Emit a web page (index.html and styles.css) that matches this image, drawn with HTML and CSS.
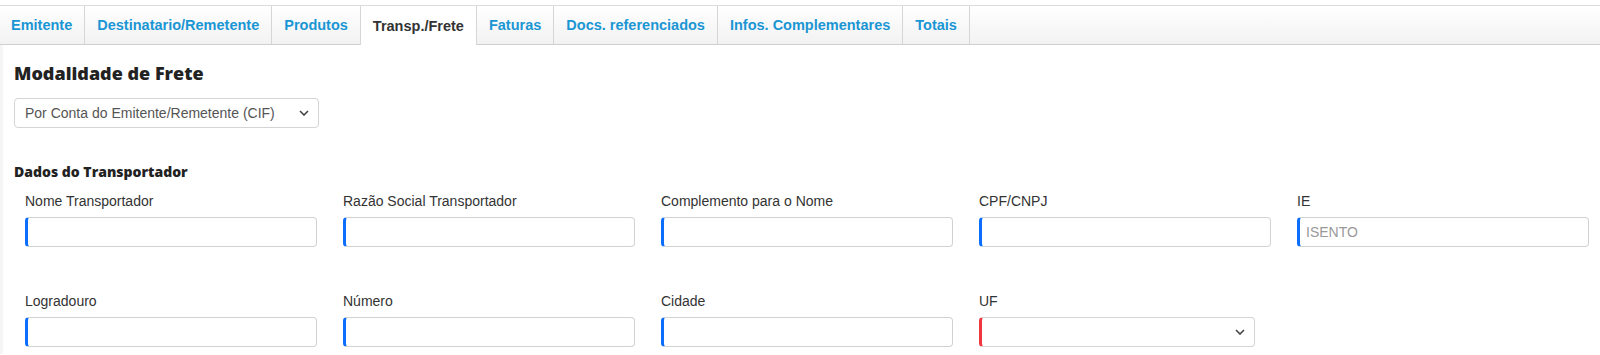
FILE: index.html
```html
<!DOCTYPE html>
<html lang="pt">
<head>
<meta charset="utf-8">
<title>Transp./Frete</title>
<link rel="stylesheet" href="styles.css">
</head>
<body>
<nav class="tabs">
  <a class="tab">Emitente</a>
  <a class="tab">Destinatario/Remetente</a>
  <a class="tab">Produtos</a>
  <a class="tab active">Transp./Frete</a>
  <a class="tab">Faturas</a>
  <a class="tab">Docs. referenciados</a>
  <a class="tab">Infos. Complementares</a>
  <a class="tab">Totais</a>
</nav>
<main class="content">
  <h2 class="title">Modalidade de Frete</h2>
  <select class="select modal">
    <option>Por Conta do Emitente/Remetente (CIF)</option>
  </select>
  <h3 class="subtitle">Dados do Transportador</h3>
  <div class="grid">
    <div class="field"><label class="label">Nome Transportador</label><input class="input" type="text"></div>
    <div class="field"><label class="label">Razão Social Transportador</label><input class="input" type="text"></div>
    <div class="field"><label class="label">Complemento para o Nome</label><input class="input" type="text"></div>
    <div class="field"><label class="label">CPF/CNPJ</label><input class="input" type="text"></div>
    <div class="field"><label class="label">IE</label><input class="input" type="text" placeholder="ISENTO"></div>
    <div class="field row2"><label class="label">Logradouro</label><input class="input" type="text"></div>
    <div class="field row2"><label class="label">Número</label><input class="input" type="text"></div>
    <div class="field row2"><label class="label">Cidade</label><input class="input" type="text"></div>
    <div class="field row2"><label class="label">UF</label><select class="select uf"><option></option></select></div>
  </div>
</main>
</body>
</html>
```

FILE: styles.css
```css
html, body {
  margin: 0;
  padding: 0;
  background: #fff;
  font-family: "Liberation Sans", Arial, sans-serif;
  color: #333;
}

.tabs {
  display: flex;
  margin-top: 5px;
  height: 38px;
  border-top: 1px solid #dcdcdc;
  border-bottom: 1px solid #cfcfcf;
  background: linear-gradient(#ffffff, #f2f2f2);
}

.tab {
  display: flex;
  align-items: center;
  padding: 0 12px;
  border-right: 1px solid #d6d6d6;
  font-size: 14.5px;
  font-weight: bold;
  color: #1a96d4;
  cursor: pointer;
  white-space: nowrap;
}

.tab:first-child {
  padding-left: 11px;
}

.tab.active {
  background: #fff;
  color: #333;
  margin-left: -1px;
  border-left: 1px solid #d6d6d6;
  margin-bottom: -1px;
}

.content {
  border-left: 3px solid #f5f5f5;
  padding: 16px 0 7px 11px;
}

.title {
  margin: 0;
  font-family: "Open Sans", sans-serif;
  font-weight: 800;
  font-size: 18px;
  line-height: 24px;
  color: #222;
}

.select {
  display: block;
  appearance: none;
  -webkit-appearance: none;
  background: #fff url("data:image/svg+xml,%3Csvg xmlns='http://www.w3.org/2000/svg' width='10' height='6' viewBox='0 0 10 6'%3E%3Cpath d='M1 1l4 4 4-4' fill='none' stroke='%23444' stroke-width='1.6'/%3E%3C/svg%3E") no-repeat right 9px center;
  border: 1px solid #d4d4d4;
  border-radius: 4px;
  font-family: "Liberation Sans", Arial, sans-serif;
  font-size: 14px;
  color: #555;
  height: 30px;
  padding: 0 24px 0 10px;
  box-sizing: border-box;
}

.modal {
  margin-top: 13px;
  width: 305px;
}

.subtitle {
  margin: 34px 0 0 0;
  font-family: "Open Sans", sans-serif;
  font-weight: 800;
  font-size: 14px;
  line-height: 19px;
  color: #222;
}

.grid {
  display: grid;
  grid-template-columns: repeat(5, 292px);
  column-gap: 26px;
  padding-left: 11px;
  margin-top: 12px;
}

.field {
  display: flex;
  flex-direction: column;
  align-items: flex-start;
}

.field.row2 {
  margin-top: 46px;
}

.label {
  font-size: 14px;
  line-height: 16px;
  color: #333;
  margin-bottom: 8px;
}

.input {
  width: 100%;
  height: 30px;
  box-sizing: border-box;
  border: 1px solid #d2d2d2;
  border-left: 3px solid #0d6efd;
  border-radius: 4px;
  padding: 0 6px;
  font-family: "Liberation Sans", Arial, sans-serif;
  font-size: 14px;
  color: #555;
  background: #fff;
}

.input::placeholder {
  color: #999;
}

.uf {
  width: 276px;
  border-left: 3px solid #f0373f;
}
```
